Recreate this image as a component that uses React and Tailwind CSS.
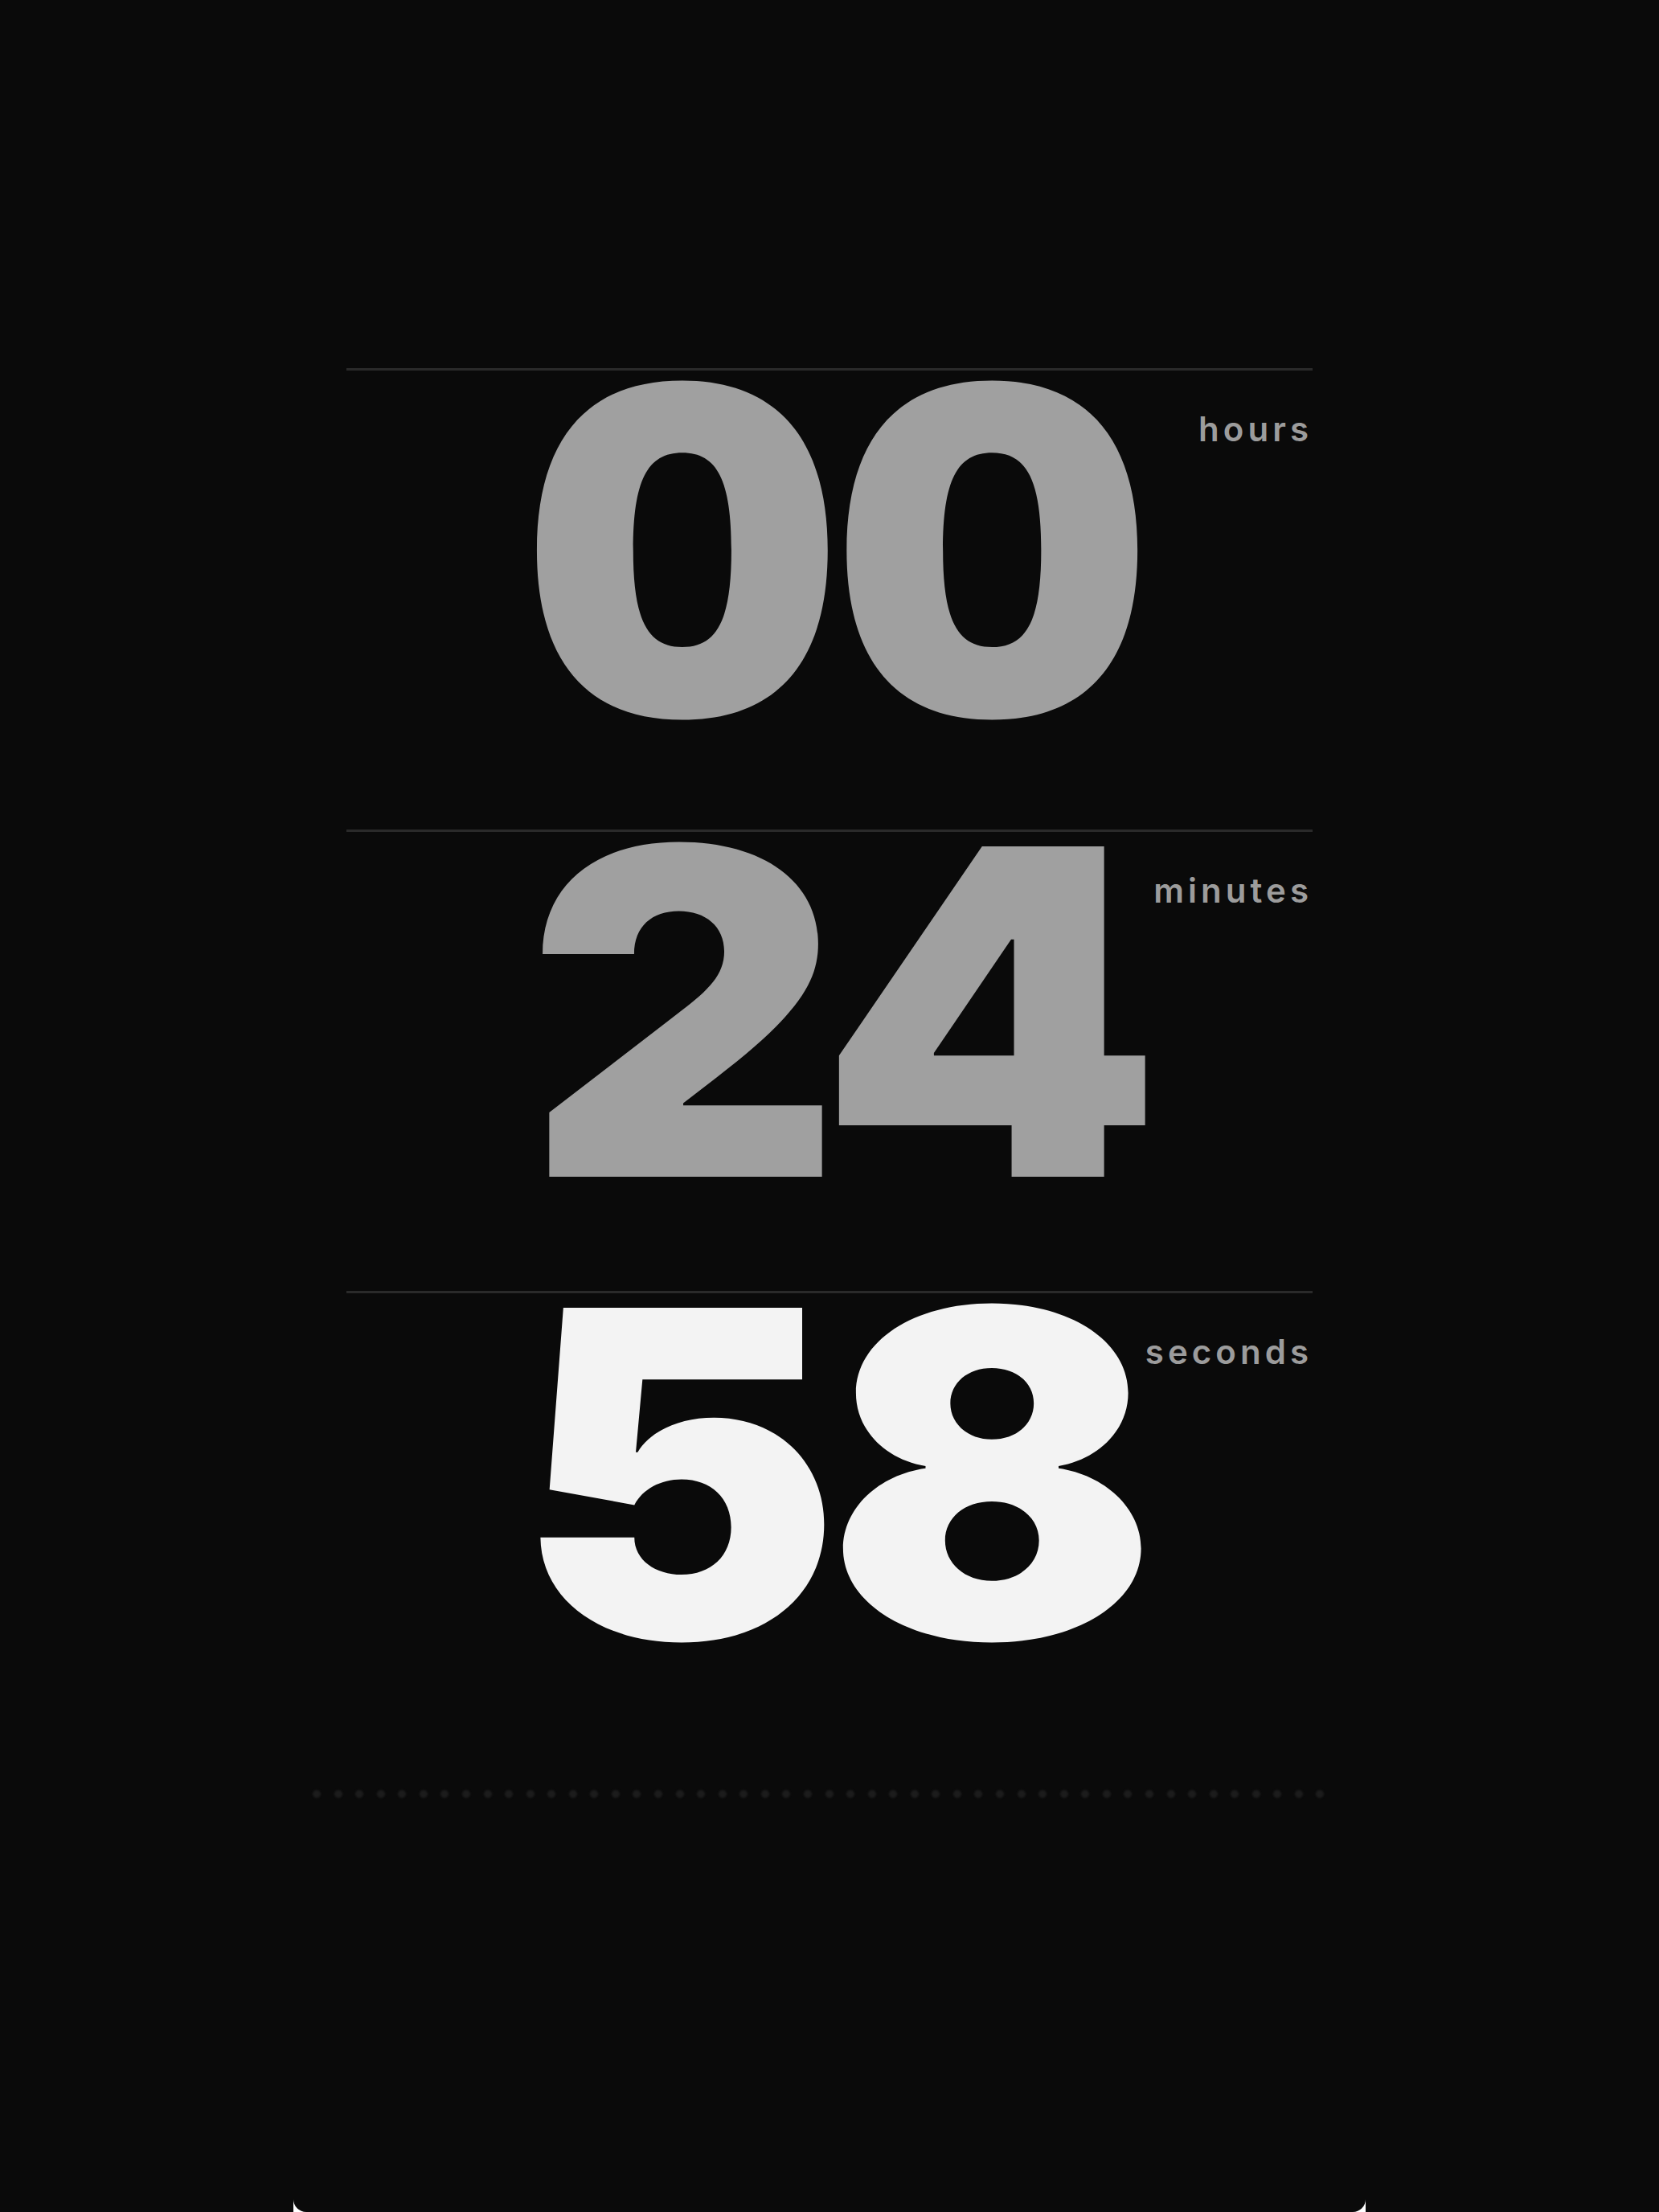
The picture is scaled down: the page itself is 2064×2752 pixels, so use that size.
import React from "react";

const rows = [
  { value: "00", label: "hours", active: false },
  { value: "24", label: "minutes", active: false },
  { value: "58", label: "seconds", active: true },
];

function TimeRow({ value, label, active }) {
  return (
    <div className="grid grid-cols-[1fr_auto_1fr] items-start border-t-[3px] border-[#2a2a2a] pb-[123px]">
      <div />
      <span
        className={`block text-[565px] leading-[448px] font-black tabular-nums tracking-[-0.01em] scale-x-[1.075] translate-x-[7px] ${
          active ? "text-[#f3f3f3]" : "text-[#a0a0a0]"
        }`}
      >
        {value}
      </span>
      <span className="justify-self-end mt-[52px] text-[42px] leading-none font-semibold tracking-[0.12em] text-[#9c9c9c]">
        {label}
      </span>
    </div>
  );
}

export default function App() {
  const dots = Array.from({ length: 48 });

  return (
    <div className="min-h-screen bg-[#0a0a0a] flex flex-col font-['Inter','Noto_Sans',sans-serif]">
      <div className="mx-auto w-[1334px] flex-1 flex flex-col">
        {/* Countdown rows */}
        <div className="px-[66px] pt-[458px]">
          {rows.map((r) => (
            <TimeRow key={r.label} {...r} />
          ))}
        </div>

        {/* Progress dots */}
        <div className="flex gap-[16.57px] pl-[24px] mt-[-126px] pt-[173px]">
          {dots.map((_, i) => (
            <span key={i} className="w-[10px] h-[10px] rounded-full bg-[#1c1c1c] blur-[1px]" />
          ))}
        </div>

        {/* Card bottom edge */}
        <div className="mt-auto h-[16px] bg-white">
          <div className="h-full bg-[#0a0a0a] rounded-b-[16px]" />
        </div>
      </div>
    </div>
  );
}
